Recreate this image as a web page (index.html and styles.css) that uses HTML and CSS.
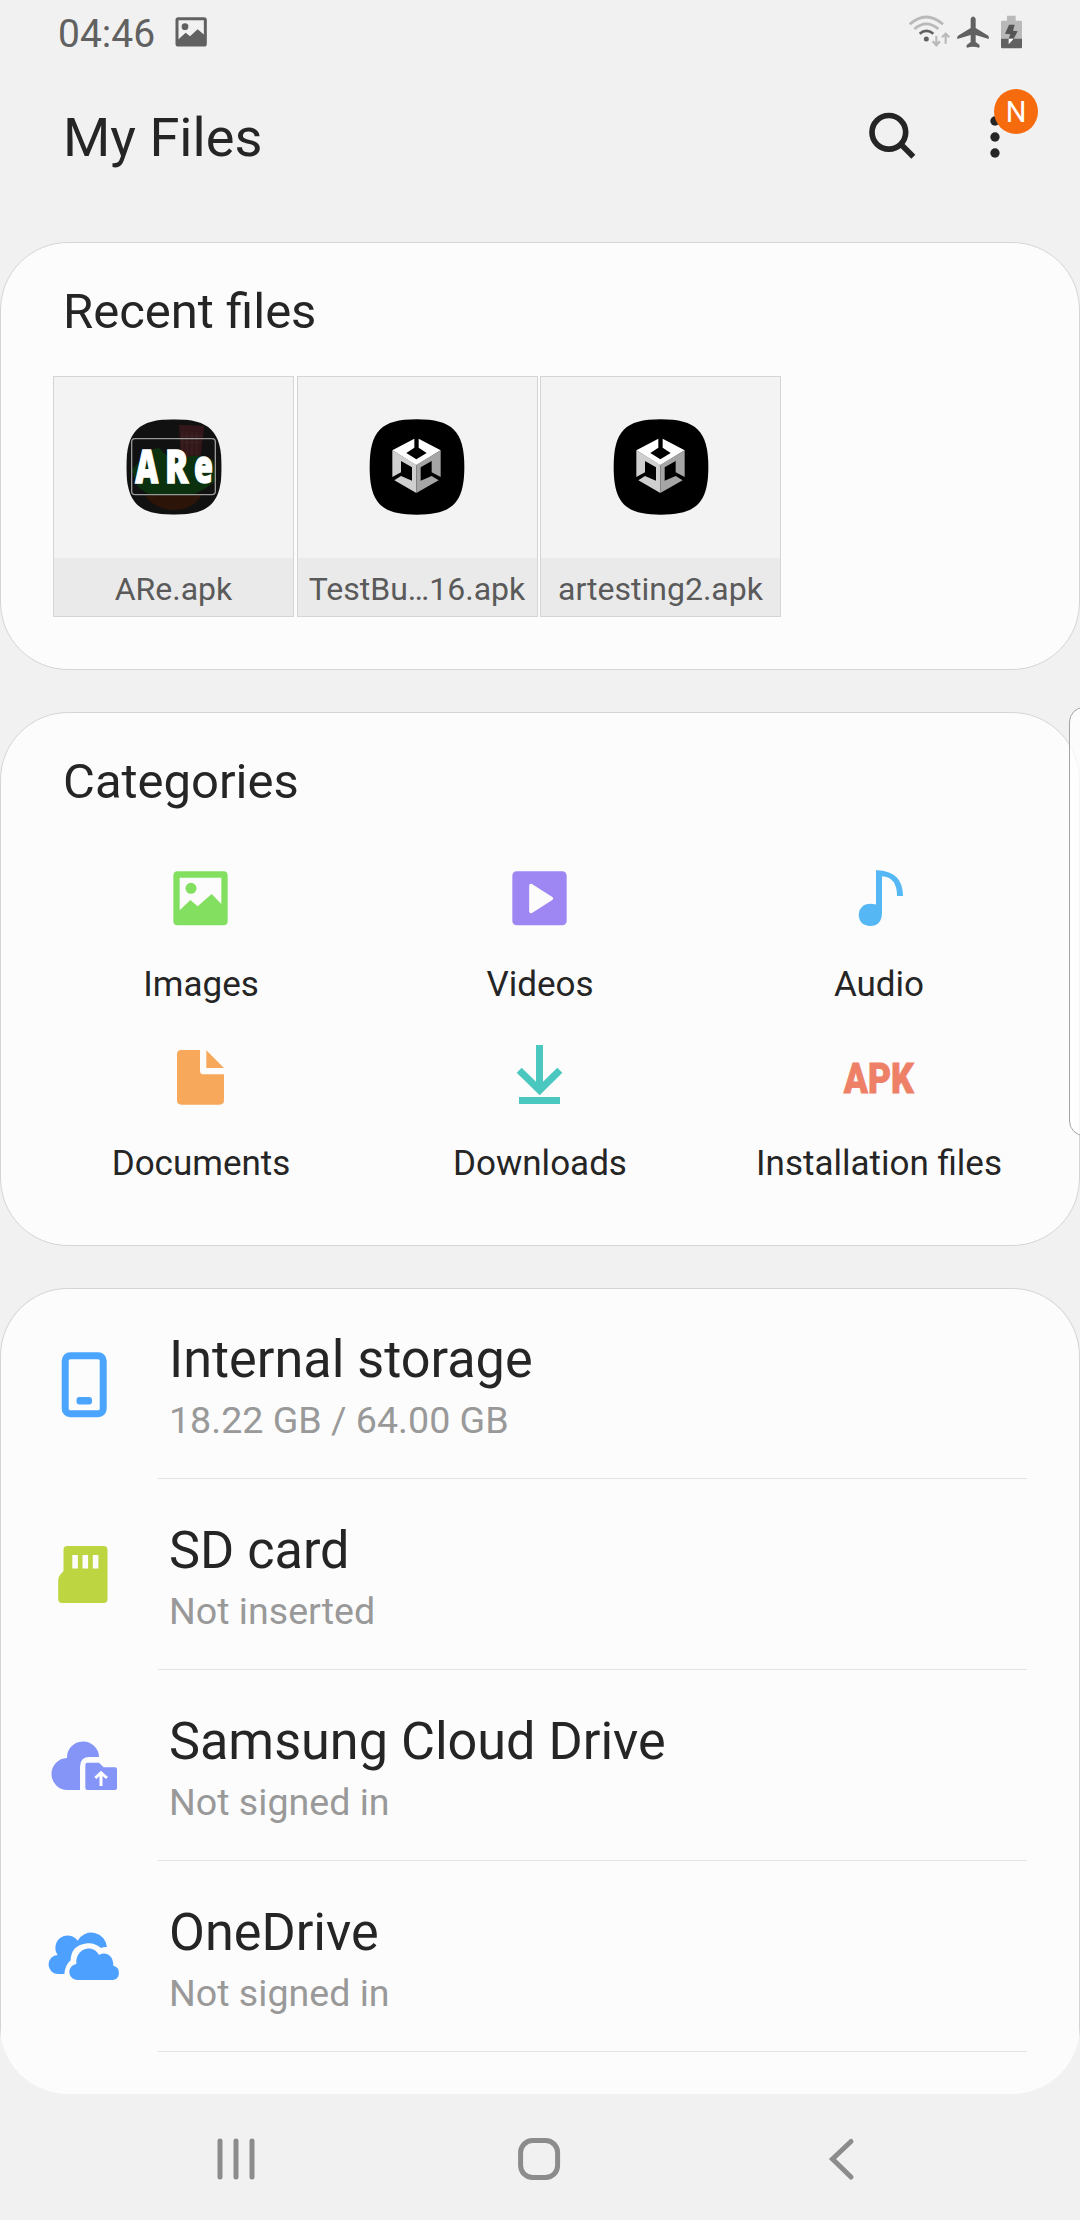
FILE: index.html
```html
<!DOCTYPE html>
<html lang="en">
<head>
<meta charset="utf-8">
<title>My Files</title>
<link rel="stylesheet" href="styles.css">
</head>
<body>
<div class="screen">
  <div class="status-bar">
    <span class="clock">04:46</span>
    <svg class="status-image" viewBox="525 50 96 90"><rect x="531" y="55" width="85" height="79" rx="4" fill="none" stroke="#616161" stroke-width="9"/><circle cx="555" cy="79" r="10" fill="#616161"/><path d="M533 119L557 97L570 108L593 87L614 105V134H533Z" fill="#616161"/></svg>
    <svg class="status-icons" viewBox="264 40 348 108">
      <g fill="none" stroke="#b9b9b9" stroke-width="8"><path d="M269 71Q319 27 369 71"/><path d="M283 85Q319 54 355 85"/><path d="M299 99Q319 82 340 99" stroke="#616161"/><path d="M349 106V132M338 122L349 134L360 122M377 129V102M366 110L377 99L388 110" stroke-width="6.5"/></g>
      <circle cx="319" cy="115" r="7.5" fill="#616161"/>
      <path d="M452 54Q459 41 467 54V82L505 105Q508 111 506 115L467 103V124L478 132Q481 139 477 141Q459 136 441 141Q437 137 441 132L452 124V103L412 115Q410 110 414 105L452 82Z" fill="#616161"/>
      <path d="M561 45H587V60H561ZM547 60H602Q606 60 606 64V115H543V64Q543 60 547 60Z" fill="#b9b9b9"/>
      <path d="M543 114H606V139Q606 143 602 143H547Q543 143 543 139Z" fill="#616161"/>
      <path d="M567 72H584L579 90L593 92L581 114H566L571 101L555 99Z" fill="#555"/><path d="M566 114H581L566 131Z" fill="#fff"/>
    </svg>
  </div>

  <header class="app-bar">
    <h1>My Files</h1>
    <svg class="search" viewBox="144 334 150 150"><g fill="none" stroke="#252525" stroke-width="17"><circle cx="206.500" cy="398" r="50.500"/><path d="M242 433L280 471"/></g></svg>
    <div class="more">
      <svg viewBox="508 343 36 132"><g fill="#252525"><circle cx="526" cy="361" r="14"/><circle cx="526" cy="409" r="14"/><circle cx="526" cy="457" r="14"/></g></svg>
      <span class="badge">N</span>
    </div>
  </header>

  <main class="content">
    <section class="card recent">
      <h2>Recent files</h2>
      <div class="tiles">
        <div class="tile">
          <div class="preview">
            <svg viewBox="379 567 288 288">
              <defs><clipPath id="squircle"><path d="M523 568C630 568 666 604 666 711S630 854 523 854S380 818 380 711S416 568 523 568Z"/></clipPath></defs>
              <g clip-path="url(#squircle)">
                <rect x="379" y="567" width="288" height="288" fill="#111"/>
                <path d="M538 584L614 588L602 684L544 680Z" fill="#321619"/>
                <path d="M548 602V675M562 604V675M577 604V675M591 606V675M544 618H606M546 637H604" stroke="#3b2222" stroke-width="4"/>
                <path d="M396 720Q420 690 440 685Q450 650 480 655Q500 685 540 690Q590 665 640 690L650 750Q590 804 520 804Q450 804 415 770Z" fill="#0c310e"/>
                <path d="M436 796H606Q580 840 522 840Q466 838 436 796Z" fill="#2c1508"/>
              </g>
              <rect x="396" y="626" width="251" height="168" rx="10" fill="none" stroke="#999" stroke-width="4"/>
              <g class="are"><text x="407" y="760" textLength="69" lengthAdjust="spacingAndGlyphs">A</text><text x="496" y="760" textLength="70" lengthAdjust="spacingAndGlyphs">R</text><text x="583" y="760" textLength="57" lengthAdjust="spacingAndGlyphs">e</text></g>
            </svg>
          </div>
          <div class="name">ARe.apk</div>
        </div>
        <div class="tile">
          <div class="preview">
            <svg viewBox="640 178 288 288">
              <defs><g id="cube">
                <path d="M783 179C890 179 926 215 926 322S890 465 783 465S642 429 642 322S676 179 783 179Z" fill="#000"/>
                <path d="M776 237V264L752 280L782 299L813 280L789 264V237L855 272L782 317L710 272Z" fill="#fff"/>
                <path d="M710 272L782 315V400L716 362L736 349L769 363V323L736 304V338L710 352Z" fill="#cfcfcf"/>
                <path d="M855 272L782 315V400L849 362L828 349L795 363V323L828 304V338L855 352Z" fill="#a5a5a5"/>
              </g></defs><use href="#cube"/>
            </svg>
          </div>
          <div class="name">TestBu…16.apk</div>
        </div>
        <div class="tile">
          <div class="preview"><svg viewBox="640 178 288 288"><use href="#cube"/></svg></div>
          <div class="name">artesting2.apk</div>
        </div>
      </div>
    </section>

    <section class="card categories">
      <h2>Categories</h2>
      <div class="grid">
        <div class="category"><svg viewBox="195 69 216 216"><path fill-rule="evenodd" fill="#83df60" d="M233 94H370Q383 94 383 107V243Q383 256 370 256H233Q220 256 220 243V107Q220 94 233 94ZM239 113V211L271 180L293 199L335 162L364 192V113Z"/><circle cx="273" cy="145" r="16.500" fill="#83df60"/></svg><span>Images</span></div>
        <div class="category"><svg viewBox="1212 69 216 216"><rect x="1237" y="94" width="163" height="162" rx="13" fill="#9e86f3"/><path d="M1293 137L1354 175.500L1293 214Z" fill="#fcfcfc" stroke="#fcfcfc" stroke-width="11" stroke-linejoin="round"/></svg><span>Videos</span></div>
        <div class="category"><svg viewBox="0 0 72 72"><path fill="#56b7f5" d="M33 7.300H35Q60 9 60 33H54Q54 14 39 13.200V51Q38 63 27.500 63Q16 62.500 15.700 51.500Q17 38 33 41.500Z"/></svg><span>Audio</span></div>
        <div class="category"><svg viewBox="195 606 216 216"><path fill="#f8a85b" d="M244 630H300V692Q300 703 311 703H372V781Q372 794 359 794H244Q231 794 231 781V643Q231 630 244 630ZM319 631L372 684H319Z"/></svg><span>Documents</span></div>
        <div class="category"><svg viewBox="1212 606 216 216"><path fill="#4ac8c0" d="M1308 615H1329V725L1372 683L1387 698L1319 766L1250 698L1265 683L1308 725ZM1257 771H1380V792H1257Z"/></svg><span>Downloads</span></div>
        <div class="category"><svg viewBox="0 0 72 72"><text class="apk" x="0.800" y="51" textLength="70" lengthAdjust="spacingAndGlyphs">APK</text></svg><span>Installation files</span></div>
      </div>
    </section>

    <section class="card storage">
      <div class="row">
        <svg viewBox="0 0 80 80"><rect x="21.200" y="11.800" width="38" height="58" rx="5" fill="none" stroke="#4ba4fd" stroke-width="7"/><rect x="32.500" y="53" width="15.500" height="7.500" rx="3" fill="#4ba4fd"/></svg>
        <div class="info"><div class="title">Internal storage</div><div class="sub">18.22 GB / 64.00 GB</div></div>
      </div>
      <div class="row">
        <svg viewBox="0 0 80 80"><path d="M23.500 11H59.500Q63.500 11 63.500 15V64Q63.500 68 59.500 68H18.200Q14.200 68 14.200 64V45Q14.200 42 16 40L19.500 36V15Q19.500 11 23.500 11Z" fill="#bdd540"/><path d="M28.300 20h5.600v13.500h-5.600zM38.500 20h5.600v13.500h-5.600zM48.800 20h5.600v13.500h-5.600z" fill="#fcfcfc"/></svg>
        <div class="info"><div class="title">SD card</div><div class="sub">Not inserted</div></div>
      </div>
      <div class="row">
        <svg viewBox="132 138 240 240"><path fill="#8494f7" d="M240 330H204A48 48 0 0 1 201 234A48 48 0 0 1 297 231H269Q240 231 240 260ZM262 248H297L311 262H345Q351 262 351 268V324Q351 330 345 330H262Q256 330 256 324V254Q256 248 262 248Z"/><path d="M303 318V278M286 294L303 278L321 294" fill="none" stroke="#fff" stroke-width="9"/></svg>
        <div class="info"><div class="title">Samsung Cloud Drive</div><div class="sub">Not signed in</div></div>
      </div>
      <div class="row">
        <svg viewBox="132 711 240 240"><path fill="#4ea0ff" d="M193 882H175A28.500 28.500 0 0 1 173 825A36 36 0 0 1 233 782A47 47 0 0 1 321 801Q311 800 303 804Q284 788 262 790Q213 795 212 841Q195 856 193 882ZM235 900A24 24 0 0 1 229 852C225 805 279 789 297 825C315 813 341 825 340 857A22 22 0 0 1 339 900Z"/></svg>
        <div class="info"><div class="title">OneDrive</div><div class="sub">Not signed in</div></div>
      </div>
      <div class="row"></div>
    </section>
  </main>

  <nav class="nav-bar">
    <svg viewBox="0 0 48 48"><path d="M8 6V42M24 6V42M40 6V42"/></svg>
    <svg viewBox="0 0 48 48"><rect x="5.600" y="5.600" width="37" height="37" rx="12"/></svg>
    <svg viewBox="0 0 48 48"><path d="M33 6.500L14.500 24L33 42"/></svg>
  </nav>
  <div class="edge-handle"></div>
</div>
</body>
</html>
```
FILE: styles.css
```css
* { box-sizing: border-box; }

body {
  margin: 0;
  background: #f1f1f1;
  color: #252525;
  font-family: Roboto, "Liberation Sans", sans-serif;
}

svg { display: block; flex: none; }
h1, h2 { margin: 0; font-weight: 400; }

.screen {
  position: relative;
  display: flex;
  flex-direction: column;
  width: 1080px;
  height: 2220px;
  overflow: hidden;
}

.status-bar {
  display: flex;
  align-items: center;
  height: 67px;
  padding: 0 56px 0 58px;
}
.clock { width: 117px; color: #616161; font-size: 39px; }
.status-image { width: 32px; height: 30px; margin-bottom: 3px; }
.status-icons { width: 116px; height: 36px; margin: 0 0 4px auto; }

.app-bar {
  display: flex;
  align-items: center;
  height: 144px;
  margin-bottom: 31px;
  padding: 0 79px 0 63px;
}
.app-bar h1 { flex: 1; margin-top: -2px; font-size: 54.2px; line-height: 64px; }
.search { width: 50px; height: 50px; margin-top: -6px; }
.more { position: relative; margin: -5px 0 0 71px; }
.more svg { width: 12px; height: 44px; }
.badge {
  position: absolute;
  left: 5px;
  top: -26px;
  width: 44px;
  height: 45px;
  border-radius: 50%;
  background: #f66b0e;
  color: #fff;
  font-size: 29px;
  line-height: 47px;
  text-align: center;
}

.content {
  display: flex;
  flex-direction: column;
  gap: 42px;
  height: 1852px;
  overflow: hidden;
  border-radius: 0 0 68px 68px;
}
.card {
  flex: none;
  border: 1px solid #d5d5d5;
  border-radius: 68px;
  background: #fcfcfc;
}
.card h2 { padding: 40px 62px 0; font-size: 49px; line-height: 58px; }

.recent { height: 428px; }
.tiles { display: flex; gap: 2.5px; margin: 35px 0 0 52px; }
.tile { width: 241px; height: 241px; border: 1px solid #d5d5d5; background: #f3f3f3; }
.preview { display: flex; align-items: center; justify-content: center; height: 181px; }
.preview svg { width: 96px; height: 96px; margin-top: -1px; }
.name {
  height: 58px;
  padding-top: 4px;
  background: #eaeaea;
  color: #5a5a5a;
  font-size: 32px;
  line-height: 54px;
  text-align: center;
  white-space: nowrap;
}
.are { font: 800 138px "Open Sans", sans-serif; fill: #fff; stroke: #fff; stroke-width: 4px; }

.categories { height: 534px; }
.grid {
  display: grid;
  grid-template-columns: repeat(3, 339px);
  justify-content: center;
  row-gap: 37px;
  margin-top: 52px;
}
.category {
  display: flex;
  flex-direction: column;
  align-items: center;
  gap: 29px;
  font-size: 35px;
  line-height: 42px;
  margin-bottom: -1px;
}
.category svg { width: 72px; height: 72px; overflow: visible; }
.apk { font: 900 43px Roboto, sans-serif; fill: #ed8067; stroke: #ed8067; stroke-width: .8px; }

.storage { border-bottom: 0; border-radius: 68px 68px 0 0; }
.row {
  display: flex;
  align-items: flex-end;
  height: 191px;
  padding: 0 52px 0 43px;
}
.row:first-child { height: 190px; }
.row svg { width: 80px; height: 80px; margin: 0 34px 55px 0; }
.info { flex: 1; padding: 0 0 36px 11px; border-bottom: 1px solid #e3e3e3; }
.title { font-size: 52.2px; line-height: 60px; }
.sub { margin-top: 8px; color: #999; font-size: 37.6px; line-height: 44px; }

.nav-bar {
  display: flex;
  align-items: center;
  justify-content: space-between;
  height: 126px;
  padding: 4px 214px 0 212px;
}
.nav-bar svg { width: 48px; height: 48px; fill: none; stroke: #8c8c8c; stroke-width: 5; stroke-linecap: round; }

.edge-handle {
  position: absolute;
  left: 1069px;
  top: 707px;
  width: 30px;
  height: 429px;
  border: 1px solid #a3a3a3;
  border-radius: 15px;
  background: rgba(255, 255, 255, .75);
}
```
